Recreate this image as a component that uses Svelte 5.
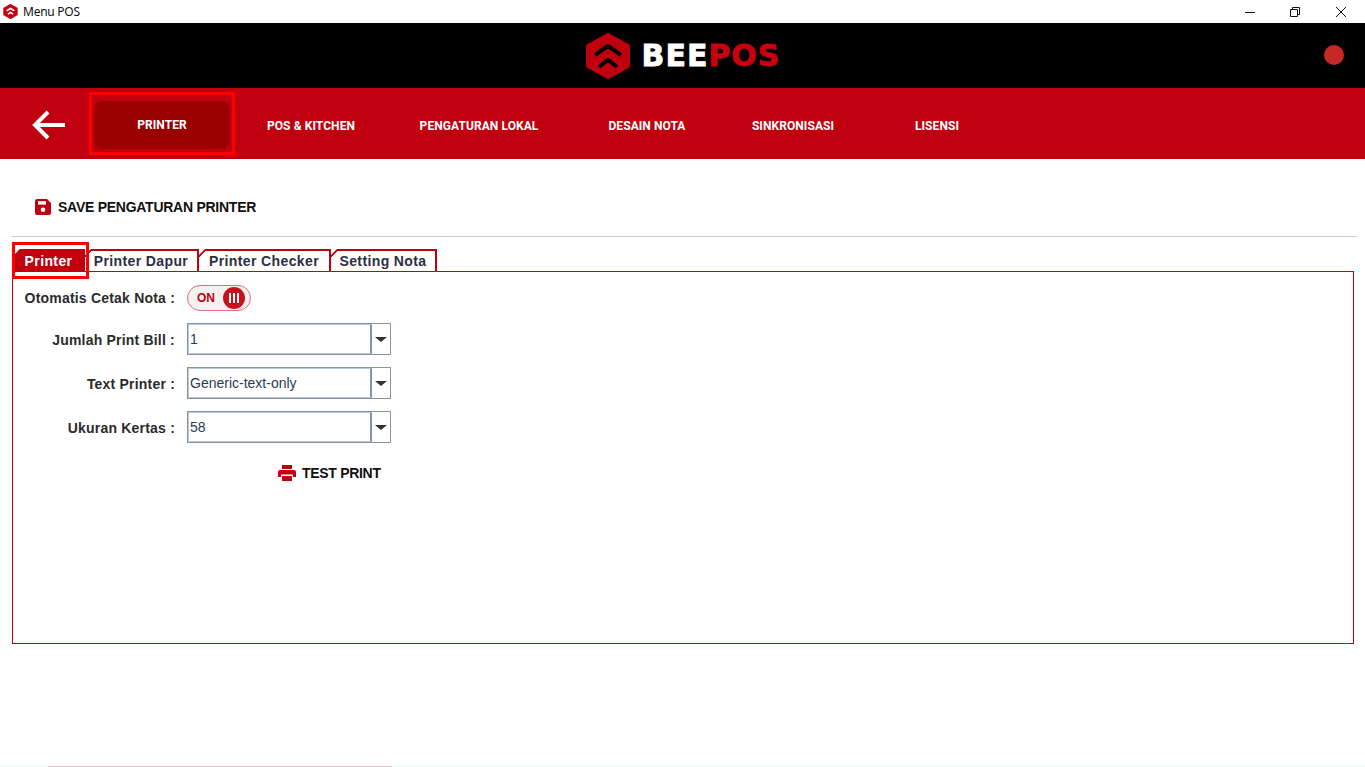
<script lang="ts">
    const navItems = [
        { label: "PRINTER", width: 146, active: true },
        { label: "POS & KITCHEN", width: 152 },
        { label: "PENGATURAN LOKAL", width: 184 },
        { label: "DESAIN NOTA", width: 152 },
        { label: "SINKRONISASI", width: 140 },
        { label: "LISENSI", width: 148 }
    ];

    const tabs = [
        { label: "Printer", width: 71, active: true },
        { label: "Printer Dapur", width: 114 },
        { label: "Printer Checker", width: 132 },
        { label: "Setting Nota", width: 106 }
    ];

    const selects = [
        { label: "Jumlah Print Bill :", value: "1" },
        { label: "Text Printer :", value: "Generic-text-only" },
        { label: "Ukuran Kertas :", value: "58" }
    ];
</script>

<div class="window">
    <div class="titlebar">
        <svg class="app-icon" viewBox="0 0 44 46" width="15" height="15">
            <path class="hex" d="M22 2 42 13V33L22 44 2 33V13Z" />
            <path class="chev" d="M10 21 22 14 34 21M14 31 22 26 30 31" />
        </svg>
        <span class="title">Menu POS</span>
        <div class="controls">
            <svg viewBox="0 0 10 10" width="10" height="10"><path d="M0 5.5H10" /></svg>
            <svg viewBox="0 0 10 10" width="10" height="10"><path d="M.5 2.5H7.5V9.5H.5ZM2.5 2.5V.5H9.5V7.5H7.5" /></svg>
            <svg viewBox="0 0 10 10" width="10" height="10"><path d="M0 0 10 10M10 0 0 10" /></svg>
        </div>
    </div>

    <header class="brand">
        <div class="logo">
            <svg viewBox="0 0 44 46" width="44" height="46">
                <path class="hex" d="M22 2 42 13V33L22 44 2 33V13Z" />
                <path class="chev big" d="M9 22 22 13 35 22M13 34 22 27 31 34" />
            </svg>
            <span class="wordmark">BEE<em>POS</em></span>
        </div>
        <span class="status"></span>
    </header>

    <nav class="nav">
        <button class="back" aria-label="Kembali">
            <svg viewBox="0 0 34 30" width="34" height="30">
                <path d="M33 15H3M16 2 3 15 16 28" />
            </svg>
        </button>
        {#each navItems as item}
            <div class="nav-item" class:active={item.active} style="width: {item.width}px">
                <span>{item.label}</span>
            </div>
        {/each}
    </nav>

    <main class="content">
        <div class="save">
            <svg viewBox="0 0 16 16" width="16" height="16">
                <path d="M2 0H12L16 4V14A2 2 0 0 1 14 16H2A2 2 0 0 1 0 14V2A2 2 0 0 1 2 0Z" />
                <rect x="3" y="2.2" width="8" height="3.4" fill="#fff" />
                <circle cx="8" cy="10.8" r="2.3" fill="#fff" />
            </svg>
            <span>SAVE PENGATURAN PRINTER</span>
        </div>
        <hr />

        <div class="tabs">
            {#each tabs as tab}
                <div class="tab" class:active={tab.active} style="width: {tab.width}px">{tab.label}</div>
            {/each}
            <span class="focus-ring"></span>
        </div>

        <section class="panel">
            <div class="row toggle-row">
                <span class="label">Otomatis Cetak Nota :</span>
                <div class="toggle">
                    <span class="on">ON</span>
                    <span class="knob"><i></i><i></i><i></i></span>
                </div>
            </div>

            {#each selects as s}
                <div class="row select-row">
                    <span class="label">{s.label}</span>
                    <div class="select">
                        <div class="select-value">{s.value}</div>
                        <div class="select-arrow"><span></span></div>
                    </div>
                </div>
            {/each}

            <div class="test">
                <svg viewBox="0 0 18 16" width="18" height="16">
                    <path d="M4 0H14V4H4ZM2 5H16A2 2 0 0 1 18 7V12H15V9.5H3V12H0V7A2 2 0 0 1 2 5ZM4 11H14V16H4Z" />
                </svg>
                <span>TEST PRINT</span>
            </div>
        </section>
    </main>

    <div class="edge"></div>
</div>

<style>
    :global(body) {
        margin: 0;
        background: #fff;
    }

    .window {
        width: 1365px;
        height: 767px;
        display: flex;
        flex-direction: column;
        overflow: hidden;
        background: #fff;
        font-family: "Liberation Sans", Arial, sans-serif;
    }

    .titlebar {
        height: 23px;
        display: flex;
        align-items: center;
        padding-left: 3px;
    }

    .title {
        margin-left: 5px;
        font: 12px "Noto Sans", "Open Sans", sans-serif;
        letter-spacing: -0.25px;
        color: #111;
    }

    .controls {
        margin-left: auto;
        margin-right: 1px;
        display: flex;
    }

    .controls svg {
        width: 46px;
        padding: 0 18px;
        box-sizing: border-box;
        fill: none;
        stroke: #111;
        stroke-width: 1;
    }

    .controls svg:first-child {
        width: 45px;
        padding-right: 17px;
    }

    .hex {
        fill: #c1000f;
        stroke: #c1000f;
        stroke-width: 4;
        stroke-linejoin: round;
    }

    .chev {
        fill: none;
        stroke: #fff;
        stroke-width: 5;
    }

    .chev.big {
        stroke: #000;
        stroke-width: 4;
    }

    .brand {
        height: 65px;
        background: #000;
        display: flex;
        align-items: center;
        justify-content: center;
        position: relative;
    }

    .logo {
        display: flex;
        align-items: center;
        gap: 12px;
        margin-left: 1px;
    }

    .wordmark {
        font: bold 30px "DejaVu Sans", sans-serif;
        color: #fff;
        letter-spacing: 1px;
        -webkit-text-stroke: 0.8px currentColor;
    }

    .wordmark em {
        font-style: normal;
        color: #c8000f;
    }

    .status {
        position: absolute;
        right: 21px;
        top: 22px;
        width: 20px;
        height: 20px;
        border-radius: 50%;
        background: #c62828;
    }

    .nav {
        height: 71px;
        background: #c1000f;
        display: flex;
        align-items: stretch;
    }

    .back {
        width: 89px;
        border: 0;
        background: none;
        display: flex;
        align-items: center;
        padding: 2px 0 0 32px;
        box-sizing: border-box;
    }

    .back svg {
        fill: none;
        stroke: #fff;
        stroke-width: 4;
    }

    .nav-item {
        display: flex;
        align-items: center;
        justify-content: center;
        padding-top: 4px;
        box-sizing: border-box;
        color: #fff;
        font: 700 12px Roboto, sans-serif;
        letter-spacing: 0.08px;
    }

    .nav-item.active {
        margin: 4px 0;
        height: 63px;
        border: 3px solid #f00;
        padding: 6px 2px 3px;
    }

    .nav-item.active span {
        width: 100%;
        height: 100%;
        display: flex;
        align-items: center;
        justify-content: center;
        background: #9b0000;
        border-radius: 8px;
    }

    .content {
        flex: 1;
        display: flex;
        flex-direction: column;
        padding: 0 8px 0 12px;
    }

    .save {
        display: flex;
        align-items: center;
        gap: 7px;
        margin: 40px 0 0 23px;
        height: 16px;
        font-size: 14px;
        font-weight: 700;
        letter-spacing: -0.26px;
        color: #111;
    }

    .save svg {
        fill: #c1000f;
    }

    hr {
        width: 100%;
        margin: 21px 0 12px;
        border: 0;
        border-top: 1px solid #c3ced8;
    }

    .tabs {
        display: flex;
        height: 22px;
        padding-left: 2px;
        position: relative;
    }

    .tab {
        box-sizing: border-box;
        height: 22px;
        border: 2px solid #c1000f;
        border-bottom: 0;
        border-left-width: 0;
        display: flex;
        align-items: center;
        justify-content: center;
        font-size: 14px;
        font-weight: 700;
        letter-spacing: 0.38px;
        color: #2b3040;
        clip-path: polygon(6px 0, 100% 0, 100% 100%, 0 100%, 0 6px);
        background: linear-gradient(135deg, transparent 4px, #c1000f 4px, #c1000f 6px, transparent 6px) border-box;
    }

    .tab.active {
        background: #c1000f;
        color: #fff;
    }

    .focus-ring {
        position: absolute;
        left: 0;
        top: -7px;
        width: 77px;
        height: 37px;
        box-sizing: border-box;
        border: 3px solid #f00;
    }

    .panel {
        box-sizing: border-box;
        width: 1342px;
        height: 373px;
        border: 1px solid #c1000f;
        padding-top: 13px;
    }

    .row {
        display: flex;
        align-items: center;
        height: 32px;
        margin-bottom: 12px;
    }

    .toggle-row {
        height: 26px;
    }

    .label {
        width: 162px;
        text-align: right;
        flex: none;
        margin-right: 12px;
        font-size: 14px;
        font-weight: 700;
        letter-spacing: 0.2px;
        color: #2b2b2b;
    }

    .select-row .label {
        padding-top: 2px;
    }

    .toggle {
        box-sizing: border-box;
        width: 64px;
        height: 26px;
        border: 1px solid #d9707a;
        border-radius: 13px;
        background: #f5f1f1;
        display: flex;
        align-items: center;
        justify-content: space-between;
        padding: 0 5px 0 9px;
    }

    .on {
        font-size: 12px;
        font-weight: 700;
        color: #c1000f;
    }

    .knob {
        width: 22px;
        height: 22px;
        border-radius: 50%;
        background: #c8101e;
        display: flex;
        align-items: center;
        justify-content: center;
        gap: 2px;
    }

    .knob i {
        width: 2px;
        height: 10px;
        background: #fff;
    }

    .select {
        box-sizing: border-box;
        width: 204px;
        height: 32px;
        border: 1px solid #8494a5;
        display: flex;
        background: #fff;
    }

    .select-value {
        flex: 1;
        box-sizing: border-box;
        border: 1px solid #b9c8d8;
        border-right: 2px solid #8494a5;
        padding-left: 1px;
        font-size: 14px;
        line-height: 28px;
        color: #2c3a55;
    }

    .select-arrow {
        width: 18px;
        display: flex;
        align-items: center;
        justify-content: center;
    }

    .select-arrow span {
        border-top: 5px solid #333;
        border-left: 6px solid transparent;
        border-right: 6px solid transparent;
    }

    .test {
        display: flex;
        align-items: center;
        gap: 6px;
        margin: 22px 0 0 265px;
        height: 16px;
        font-size: 14px;
        font-weight: 700;
        letter-spacing: -0.3px;
        color: #111;
    }

    .test svg {
        fill: #c1000f;
    }

    .edge {
        height: 1px;
        background: linear-gradient(to right, #e6f4f1 48px, #d8c4cc 48px, #d8c4cc 392px, #e6f4f1 392px);
    }
</style>
